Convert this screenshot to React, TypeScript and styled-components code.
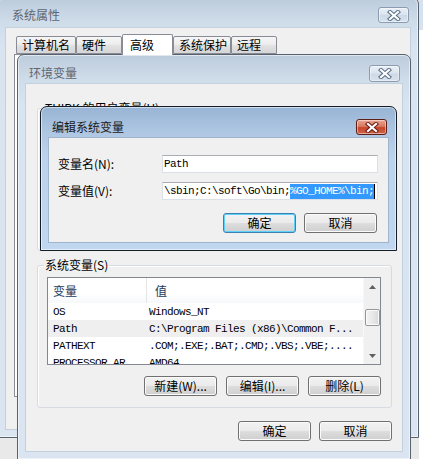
import React from "react";
import styled, { createGlobalStyle } from "styled-components";

const UI = `"Noto Sans CJK SC", "Microsoft YaHei", sans-serif`;
const MONO = `"Liberation Mono", "Noto Sans CJK SC", monospace`;

const GlobalStyle = createGlobalStyle`
  html, body { margin: 0; padding: 0; }
  body { background: #ffffff; font-family: ${UI}; font-size: 12px; color: #000; }
  * { box-sizing: border-box; }
`;

const Desktop = styled.div`
  position: relative;
  width: 423px;
  height: 459px;
  overflow: hidden;
  background: #e9e9e9;
`;

type WinProps = { $active?: boolean; $x: number; $y: number; $w: number; $h: number };

const Win = styled.div<WinProps>`
  position: absolute;
  left: ${(p) => p.$x}px;
  top: ${(p) => p.$y}px;
  width: ${(p) => p.$w}px;
  height: ${(p) => p.$h}px;
  display: flex;
  flex-direction: column;
  padding: 0 7px 7px;
  border: 1px solid ${(p) => (p.$active ? "#141c26" : "#56626f")};
  border-radius: 7px 7px 0 0;
  background: ${(p) =>
    p.$active
      ? "linear-gradient(180deg, #98b4d4 0px, #adc6e2 24px, #bcd3ec 50px, #c0d7ef 100%)"
      : "linear-gradient(180deg, #bccbdb 0px, #cfdcea 24px, #d8e4f0 50px, #dae5f1 100%)"};
  box-shadow: inset 0 0 0 1px rgba(255, 255, 255, 0.55);
`;

const TitleBar = styled.div<{ $h: number; $pt: number; $pl: number; $pr: number }>`
  flex: none;
  height: ${(p) => p.$h}px;
  padding: ${(p) => p.$pt}px ${(p) => p.$pr}px 0 ${(p) => p.$pl}px;
  display: flex;
  align-items: center;
  justify-content: space-between;
`;

const Title = styled.span<{ $active?: boolean }>`
  font-family: ${UI};
  font-size: 12px;
  line-height: 14px;
  color: ${(p) => (p.$active ? "#1a1a1a" : "#5e6670")};
`;

const CloseBtn = styled.div<{ $active?: boolean; $h: number }>`
  width: 31px;
  height: ${(p) => p.$h}px;
  border-radius: 3px;
  display: flex;
  align-items: center;
  justify-content: center;
  border: 1px solid ${(p) => (p.$active ? "#5e1f17" : "#8b9cb2")};
  background: ${(p) =>
    p.$active
      ? "linear-gradient(180deg, #e9a593 0%, #d97a63 45%, #c5452c 55%, #d0644a 100%)"
      : "linear-gradient(180deg, #e9eff6 0%, #dbe4ee 48%, #cdd9e7 52%, #d8e2ee 100%)"};
  box-shadow: inset 0 0 0 1px rgba(255, 255, 255, 0.45);
`;

const XGlyph = ({ outline }: { outline: string }) => (
  <svg width="14" height="11" viewBox="0 0 14 11">
    <path d="M3 2 L11 9 M11 2 L3 9" stroke={outline} strokeWidth="4.2" strokeLinecap="square" fill="none" />
    <path d="M3 2 L11 9 M11 2 L3 9" stroke="#ffffff" strokeWidth="2.2" strokeLinecap="square" fill="none" />
  </svg>
);

const Client = styled.div<{ $edge: string }>`
  flex: 1;
  min-height: 0;
  background: #f0f0f0;
  border: 1px solid ${(p) => p.$edge};
  display: flex;
  flex-direction: column;
  overflow: hidden;
`;

/* ---------- outer window: tabs ---------- */
const OuterBody = styled.div`
  flex: 1;
  display: flex;
  flex-direction: column;
  padding: 5px 7px 32px 8px;
`;

const TabRow = styled.div`
  display: flex;
  align-items: flex-end;
  height: 21px;
  padding-left: 2px;
  position: relative;
  z-index: 1;
`;

const Tab = styled.div<{ $w: number; $sel?: boolean }>`
  width: ${(p) => p.$w}px;
  height: ${(p) => (p.$sel ? 21 : 18)}px;
  margin-bottom: ${(p) => (p.$sel ? -1 : 0)}px;
  border: 1px solid #898c95;
  border-bottom: ${(p) => (p.$sel ? "none" : "1px solid #898c95")};
  border-radius: 2px 2px 0 0;
  background: ${(p) =>
    p.$sel ? "#ffffff" : "linear-gradient(180deg, #f6f6f6 0%, #ededed 45%, #e1e1e1 55%, #d6d6d6 100%)"};
  display: flex;
  align-items: center;
  padding-left: ${(p) => (p.$sel ? 7 : 5)}px;
  font-size: 12px;
  line-height: 14px;
  color: #000;
`;

const TabPanel = styled.div`
  flex: 1;
  background: #ffffff;
  border: 1px solid #898c95;
`;

/* ---------- env window ---------- */
const EnvBody = styled.div`
  flex: 1;
  display: flex;
  flex-direction: column;
  padding: 18px 10px 0 11px;
  gap: 8px;
`;

const Group = styled.fieldset<{ $h: number }>`
  margin: 0;
  height: ${(p) => p.$h}px;
  padding: 6px 10px 10px 9px;
  border: 1px solid #d5dbe0;
  border-radius: 3px;
  box-shadow: inset 1px 1px 0 #ffffff;
  min-width: 0;
`;

const Legend = styled.legend`
  padding: 0 1px;
  margin-left: -3px;
  font-size: 12px;
  line-height: 12px;
  color: #000;
  white-space: nowrap;
`;

const GroupInner = styled.div`
  display: flex;
  flex-direction: column;
  gap: 11px;
`;

const ListView = styled.div`
  height: 88px;
  border: 1px solid #828790;
  background: #ffffff;
  display: flex;
  overflow: hidden;
`;

const ListMain = styled.div`
  flex: 1;
  min-width: 0;
  display: flex;
  flex-direction: column;
`;

const HeaderRow = styled.div`
  flex: none;
  height: 25px;
  display: flex;
  background: linear-gradient(180deg, #ffffff 0%, #ffffff 60%, #f7f8fa 100%);
`;

const HeaderCell = styled.div<{ $w?: number; $pl: number; $div?: boolean }>`
  ${(p) => (p.$w ? `width: ${p.$w}px; flex: none;` : "flex: 1;")}
  padding-left: ${(p) => p.$pl}px;
  display: flex;
  align-items: center;
  font-size: 12px;
  color: #1e395b;
  border-right: ${(p) => (p.$div ? "1px solid #e5e5e5" : "none")};
`;

const Row = styled.div<{ $hot?: boolean }>`
  flex: none;
  height: 17px;
  display: flex;
  align-items: center;
  background: ${(p) => (p.$hot ? "#efefef" : "transparent")};
`;

const Cell = styled.div<{ $w?: number; $pl: number }>`
  ${(p) => (p.$w ? `width: ${p.$w}px; flex: none;` : "flex: 1;")}
  padding-left: ${(p) => p.$pl}px;
  font-family: ${MONO};
  font-size: 11px;
  letter-spacing: -0.6px;
  white-space: nowrap;
  overflow: hidden;
  color: #000;
`;

const ScrollBar = styled.div`
  flex: none;
  width: 17px;
  display: flex;
  flex-direction: column;
  background: #f0f0f0;
  border-left: 1px solid #f7f7f7;
`;

const ScrollArrow = styled.div`
  flex: none;
  height: 17px;
  display: flex;
  align-items: center;
  justify-content: center;
`;

const ScrollTrack = styled.div`
  flex: 1;
  padding-top: 14px;
  display: flex;
  justify-content: center;
`;

const Thumb = styled.div`
  width: 15px;
  height: 17px;
  border: 1px solid #979797;
  border-radius: 2px;
  background: linear-gradient(90deg, #f3f3f3 0%, #e8e8e8 50%, #d9d9d9 100%);
  box-shadow: inset 0 0 0 1px #fbfbfb;
`;

const Arrow = ({ up }: { up?: boolean }) => (
  <svg width="7" height="4" viewBox="0 0 7 4">
    <path d={up ? "M0 4 L3.5 0 L7 4 Z" : "M0 0 L3.5 4 L7 0 Z"} fill="#606060" />
  </svg>
);

const ButtonRow = styled.div<{ $gap: number; $pr?: number }>`
  display: flex;
  justify-content: flex-end;
  gap: ${(p) => p.$gap}px;
  padding-right: ${(p) => p.$pr ?? 0}px;
`;

const Button = styled.div<{ $default?: boolean }>`
  width: 73px;
  height: 20px;
  border: 1px solid ${(p) => (p.$default ? "#3c7fb1" : "#707070")};
  border-radius: 3px;
  background: linear-gradient(180deg, #f2f2f2 0%, #ebebeb 48%, #dddddd 52%, #cfcfcf 100%);
  box-shadow: inset 0 0 0 1px ${(p) => (p.$default ? "#5fd0fa" : "#fbfbfb")};
  display: flex;
  align-items: center;
  justify-content: center;
  font-size: 12px;
  line-height: 14px;
  color: #000;
  white-space: nowrap;
`;

const BottomButtons = styled(ButtonRow)`
  margin-top: 5px;
`;

/* ---------- edit dialog ---------- */
const EditBody = styled.div`
  flex: 1;
  display: flex;
  flex-direction: column;
  padding: 17px 10px 0 9px;
  gap: 9px;
`;

const FieldRow = styled.div`
  display: flex;
  align-items: center;
`;

const Label = styled.div`
  width: 104px;
  flex: none;
  font-size: 12px;
  line-height: 14px;
  color: #000;
  white-space: nowrap;
`;

const TextBox = styled.div<{ $end?: boolean }>`
  flex: 1;
  height: 18px;
  background: #ffffff;
  border: 1px solid #dbdfe6;
  border-top-color: #abadb3;
  display: flex;
  align-items: center;
  justify-content: ${(p) => (p.$end ? "flex-end" : "flex-start")};
  padding: 0 2px 0 1px;
  overflow: hidden;
  white-space: nowrap;
  font-family: ${MONO};
  font-size: 11px;
  letter-spacing: -0.6px;
  color: #000;
`;

const Selected = styled.span`
  background: #3399ff;
  color: #ffffff;
  line-height: 15px;
  border-right: 1px solid #000;
`;

const EditButtons = styled(ButtonRow)`
  margin-top: 4px;
`;

const RightStrip = styled.div`
  position: absolute;
  left: 419px;
  top: 0;
  width: 4px;
  height: 459px;
  background: #ffffff;
  border-top: 30px solid #d6e2ef;
`;

const rows = [
  { n: "OS", v: "Windows_NT" },
  { n: "Path", v: "C:\\Program Files (x86)\\Common F...", hot: true },
  { n: "PATHEXT", v: ".COM;.EXE;.BAT;.CMD;.VBS;.VBE;...." },
  { n: "PROCESSOR_AR", v: "AMD64" },
];

export default function App() {
  return (
    <Desktop>
      <GlobalStyle />
      <RightStrip />

      <Win $x={-3} $y={-3} $w={422} $h={441}>
        <TitleBar $h={29} $pt={5} $pl={7} $pr={2}>
          <Title>系统属性</Title>
          <CloseBtn $h={16}>
            <XGlyph outline="#5b6e85" />
          </CloseBtn>
        </TitleBar>
        <Client $edge="#c3d0de">
          <OuterBody>
            <TabRow>
              <Tab $w={60}>计算机名</Tab>
              <Tab $w={46}>硬件</Tab>
              <Tab $w={51} $sel>
                高级
              </Tab>
              <Tab $w={58}>系统保护</Tab>
              <Tab $w={46}>远程</Tab>
            </TabRow>
            <TabPanel />
          </OuterBody>
        </Client>
      </Win>

      <Win $x={17} $y={54} $w={394} $h={406}>
        <TitleBar $h={28} $pt={8} $pl={4} $pr={3}>
          <Title>环境变量</Title>
          <CloseBtn $h={17}>
            <XGlyph outline="#5b6e85" />
          </CloseBtn>
        </TitleBar>
        <Client $edge="#c3d0de">
          <EnvBody>
            <Group $h={149}>
              <Legend>TUIPK 的用户变量(U)</Legend>
            </Group>
            <Group $h={149}>
              <Legend>系统变量(S)</Legend>
              <GroupInner>
                <ListView>
                  <ListMain>
                    <HeaderRow>
                      <HeaderCell $w={99} $pl={5} $div>
                        变量
                      </HeaderCell>
                      <HeaderCell $pl={8}>值</HeaderCell>
                    </HeaderRow>
                    {rows.map((r) => (
                      <Row key={r.n} $hot={r.hot}>
                        <Cell $w={99} $pl={5}>
                          {r.n}
                        </Cell>
                        <Cell $pl={2}>{r.v}</Cell>
                      </Row>
                    ))}
                  </ListMain>
                  <ScrollBar>
                    <ScrollArrow>
                      <Arrow up />
                    </ScrollArrow>
                    <ScrollTrack>
                      <Thumb />
                    </ScrollTrack>
                    <ScrollArrow>
                      <Arrow />
                    </ScrollArrow>
                  </ScrollBar>
                </ListView>
                <ButtonRow $gap={9}>
                  <Button>新建(W)...</Button>
                  <Button>编辑(I)...</Button>
                  <Button>删除(L)</Button>
                </ButtonRow>
              </GroupInner>
            </Group>
            <BottomButtons $gap={8} $pr={0}>
              <Button>确定</Button>
              <Button>取消</Button>
            </BottomButtons>
          </EnvBody>
        </Client>
      </Win>

      <Win $active $x={40} $y={106} $w={357} $h={145}>
        <TitleBar $h={30} $pt={10} $pl={4} $pr={2}>
          <Title $active>编辑系统变量</Title>
          <CloseBtn $active $h={16}>
            <XGlyph outline="#6b1c12" />
          </CloseBtn>
        </TitleBar>
        <Client $edge="#9fb5cc">
          <EditBody>
            <FieldRow>
              <Label>变量名(N):</Label>
              <TextBox>Path</TextBox>
            </FieldRow>
            <FieldRow>
              <Label>变量值(V):</Label>
              <TextBox $end>
                :\sbin;C:\soft\Go\bin;<Selected>%GO_HOME%\bin;</Selected>
              </TextBox>
            </FieldRow>
            <EditButtons $gap={8} $pr={1}>
              <Button $default>确定</Button>
              <Button>取消</Button>
            </EditButtons>
          </EditBody>
        </Client>
      </Win>
    </Desktop>
  );
}
